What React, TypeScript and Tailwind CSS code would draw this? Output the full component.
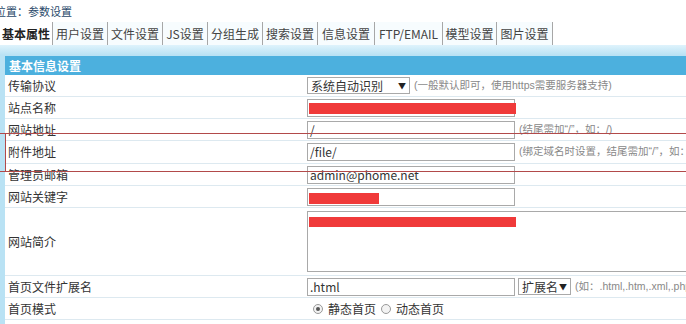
import React from 'react';

const tabs = [
  { label: '基本属性', w: 'w-[53px]', active: true },
  { label: '用户设置', w: 'w-[55px]' },
  { label: '文件设置', w: 'w-[55px]' },
  { label: 'JS设置', w: 'w-[45px]' },
  { label: '分组生成', w: 'w-[55px]' },
  { label: '搜索设置', w: 'w-[55px]' },
  { label: '信息设置', w: 'w-[57px]' },
  { label: 'FTP/EMAIL', w: 'w-[68px]' },
  { label: '模型设置', w: 'w-[54px]' },
  { label: '图片设置', w: 'w-[56px]' },
];

function Row({ label, h = 'h-[22px]', children }: { label: string; h?: string; children?: React.ReactNode }) {
  return (
    <div className={`flex items-center border-b border-[#dde9f0] bg-white ${h}`}>
      <div className="w-[302px] shrink-0 pl-[3px] text-[12px] text-[#333]">{label}</div>
      <div className="flex items-center flex-1 min-w-0">{children}</div>
    </div>
  );
}

function Input({ value, children }: { value?: string; children?: React.ReactNode }) {
  return (
    <div className="relative w-[208px] h-[18px] shrink-0 border border-[#a9a9a9] bg-white px-[2px] text-[12px] leading-[16px] text-[#333]">
      {value}
      {children}
    </div>
  );
}

function Hint({ text }: { text: string }) {
  return (
    <span className="ml-[4px] whitespace-nowrap font-['Liberation_Sans','Noto_Sans_CJK_SC',sans-serif] text-[10.5px] text-[#888]">
      {text}
    </span>
  );
}

export default function App() {
  return (
    <div className="relative w-[686px] h-[324px] overflow-hidden bg-white font-['Noto_Sans_CJK_SC',sans-serif]">
      <div className="h-[22px] -ml-[5px] pt-[4px] text-[11px] leading-[14px] text-[#2a4a6a]">位置：参数设置</div>

      <div className="flex h-[23px] w-[800px]">
        {tabs.map((t) => (
          <div
            key={t.label}
            className={`${t.w} shrink-0 flex items-center justify-center whitespace-nowrap border-r border-[#a7a7a7] text-[12px] ${
              t.active ? 'font-bold text-[#222] bg-white' : 'text-[#444] bg-[#f7fcfe]'
            }`}
          >
            {t.label}
          </div>
        ))}
      </div>

      <div className="h-[10px] w-[800px] bg-gradient-to-b from-[#dff3fc] to-[#b9e2f4]" />

      <div className="flex w-[800px] bg-[#b9e2f4]">
        <div className="w-[5px] shrink-0" />
        <div className="flex-1 pt-[1px]">
          <div className="h-[19px] bg-[#4cb0de] pl-[4px] text-[12px] leading-[19px] font-bold text-white">基本信息设置</div>

          <Row label="传输协议">
            <div className="flex items-center justify-between w-[103px] h-[17px] border border-[#a9a9a9] bg-white px-[3px] text-[12px] text-[#333] whitespace-nowrap">
              <span>系统自动识别</span>
              <span className="text-[8px] text-[#222]">▼</span>
            </div>
            <Hint text="(一般默认即可，使用https需要服务器支持)" />
          </Row>
          <Row label="站点名称">
            <Input>
              <div className="absolute left-[1px] right-[-2px] top-[3px] h-[11px] bg-[#f03a3a]" />
            </Input>
          </Row>
          <Row label="网站地址">
            <Input value="/" />
            <Hint text="(结尾需加“/”，如：/)" />
          </Row>
          <Row label="附件地址" h="h-[23px]">
            <Input value="/file/" />
            <Hint text="(绑定域名时设置，结尾需加“/”，如：/)" />
          </Row>
          <Row label="管理员邮箱">
            <Input value="admin@phome.net" />
          </Row>
          <Row label="网站关键字">
            <Input>
              <div className="absolute left-[1px] top-[4px] w-[70px] h-[11px] bg-[#f03a3a]" />
            </Input>
          </Row>
          <Row label="网站简介" h="h-[68px]">
            <div className="relative w-[420px] h-[61px] shrink-0 border border-[#a9a9a9] bg-white">
              <div className="absolute left-[1px] top-[5px] w-[207px] h-[10px] bg-[#f03a3a]" />
            </div>
          </Row>
          <Row label="首页文件扩展名">
            <Input value=".html" />
            <div className="ml-[3px] flex items-center justify-between w-[53px] h-[17px] shrink-0 whitespace-nowrap border border-[#a9a9a9] bg-white px-[3px] text-[12px] text-[#333]">
              <span>扩展名</span>
              <span className="text-[8px] text-[#222]">▼</span>
            </div>
            <Hint text="(如：.html,.htm,.xml,.php)" />
          </Row>
          <Row label="首页模式">
            <div className="flex items-center pl-[6px] text-[12px] text-[#333]">
              <span className="flex items-center justify-center w-[10px] h-[10px] rounded-full border border-[#999] bg-[#f3f3f3]">
                <span className="w-[4px] h-[4px] rounded-full bg-[#555]" />
              </span>
              <span className="ml-[5px]">静态首页</span>
              <span className="ml-[5px] w-[10px] h-[10px] rounded-full border border-[#999] bg-[#f3f3f3]" />
              <span className="ml-[5px]">动态首页</span>
            </div>
          </Row>
          <Row label="" />
        </div>
      </div>

      {/* red annotation box */}
      <div className="absolute left-0 top-[133px] w-[700px] h-[1px] bg-[#b24a4a]" />
      <div className="absolute left-[5px] top-[133px] w-[1px] h-[39px] bg-[#b24a4a]" />
      <div className="absolute left-0 top-[171px] w-[700px] h-[1px] bg-[#b24a4a]" />
    </div>
  );
}
